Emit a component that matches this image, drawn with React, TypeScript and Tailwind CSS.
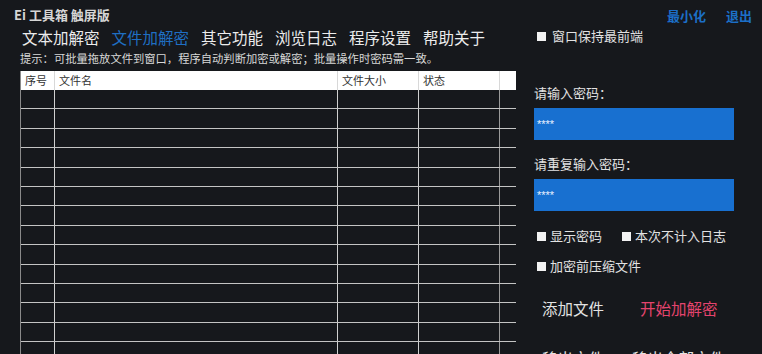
import React from "react";

const FONT = { fontFamily: '"Noto Sans CJK SC", "Noto Sans", sans-serif' };

function Box({ className = "" }: { className?: string }) {
  return <span className={"inline-block shrink-0 w-[9px] h-[9px] bg-[#f2f2f2] " + className} />;
}

export default function App() {
  const rows = Array.from({ length: 14 });
  return (
    <div
      className="w-[762px] h-[354px] overflow-hidden bg-[#16181c] text-[#e2e2e2] flex flex-col"
      style={FONT}
    >
      {/* header */}
      <div className="h-[27px] flex justify-between items-start pl-[14px] pr-[10px] pt-[7px] shrink-0">
        <div className="text-[13px] leading-[16px] font-bold text-[#d6d6d6]">Ei 工具箱 触屏版</div>
        <div className="flex gap-[20px] text-[13px] leading-[16px] font-bold text-[#1c6fc7] pt-[1px]">
          <span>最小化</span>
          <span>退出</span>
        </div>
      </div>

      <div className="flex flex-1 min-h-0">
        {/* left column */}
        <div className="w-[516px] shrink-0 flex flex-col pl-[20px]">
          <div className="shrink-0 flex gap-[12px] pl-[2px] text-[15.5px] leading-[20px] text-[#ececec]">
            <span>文本加解密</span>
            <span className="text-[#1f6fc3]">文件加解密</span>
            <span>其它功能</span>
            <span>浏览日志</span>
            <span>程序设置</span>
            <span>帮助关于</span>
          </div>
          <div className="shrink-0 mt-[3px] text-[11.3px] leading-[16px] text-[#d8d8d8] whitespace-nowrap">
            提示：可批量拖放文件到窗口，程序自动判断加密或解密；批量操作时密码需一致。
          </div>
          <div className="shrink-0 mt-[5px] border-l border-[#8a8a8a] flex flex-col">
            <div className="h-[19px] shrink-0 bg-white flex text-[11px] leading-[19px] text-[#333]">
              <div className="w-[34px] border-r border-[#d8d8d8] pl-[4px]">序号</div>
              <div className="w-[283px] border-r border-[#d8d8d8] pl-[4px]">文件名</div>
              <div className="w-[81px] border-r border-[#d8d8d8] pl-[4px]">文件大小</div>
              <div className="w-[81px] border-r border-[#d8d8d8] pl-[4px]">状态</div>
              <div className="flex-1" />
            </div>
            {rows.map((_, i) => (
              <div key={i} className="h-[19.4px] shrink-0 flex border-b border-[#c4c4c4]">
                <div className="w-[34px] border-r border-[#d0d0d0]" />
                <div className="w-[283px] border-r border-[#d0d0d0]" />
                <div className="w-[81px] border-r border-[#d0d0d0]" />
                <div className="w-[81px] border-r border-[#9a9a9a]" />
                <div className="flex-1" />
              </div>
            ))}
          </div>
        </div>

        {/* right column */}
        <div className="flex-1 pl-[18px] flex flex-col">
          <div className="shrink-0 mt-[1px] h-[16px] flex items-center pl-[3px] text-[13px] leading-[16px]">
            <Box />
            <span className="ml-[6px]">窗口保持最前端</span>
          </div>
          <div className="shrink-0 mt-[40px] text-[13px] leading-[18px]">请输入密码：</div>
          <div
            className="shrink-0 mt-[6px] w-[200px] h-[32px] bg-[#1870d0] flex items-center pl-[3px] text-[11px] text-[#e8f0ff]"
            style={{ fontFamily: '"Liberation Sans", sans-serif' }}
          >
            ****
          </div>
          <div className="shrink-0 mt-[15px] text-[13px] leading-[18px]">请重复输入密码：</div>
          <div
            className="shrink-0 mt-[6px] w-[200px] h-[32px] bg-[#1870d0] flex items-center pl-[3px] text-[11px] text-[#e8f0ff]"
            style={{ fontFamily: '"Liberation Sans", sans-serif' }}
          >
            ****
          </div>
          <div className="shrink-0 mt-[17px] h-[16px] flex items-center pl-[3px] text-[13px] leading-[16px]">
            <Box />
            <span className="ml-[4px]">显示密码</span>
            <Box className="ml-[20px]" />
            <span className="ml-[4px]">本次不计入日志</span>
          </div>
          <div className="shrink-0 mt-[14px] h-[16px] flex items-center pl-[3px] text-[13px] leading-[16px]">
            <Box />
            <span className="ml-[4px]">加密前压缩文件</span>
          </div>
          <div className="shrink-0 mt-[24px] flex text-[15.5px] leading-[20px] pl-[8px]">
            <span className="w-[98px]">添加文件</span>
            <span className="text-[#e4446e]">开始加解密</span>
          </div>
          <div className="shrink-0 mt-[30px] flex text-[15.5px] leading-[20px] pl-[8px]">
            <span className="w-[90px]">移出文件</span>
            <span>移出全部文件</span>
          </div>
        </div>
      </div>
    </div>
  );
}
